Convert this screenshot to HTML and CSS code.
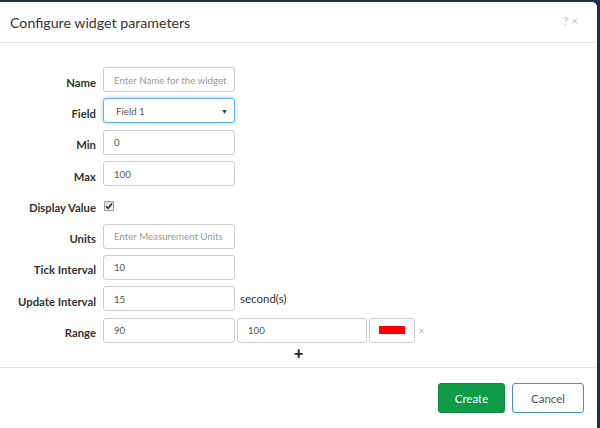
FILE: index.html
```html
<!DOCTYPE html>
<html>
<head>
<meta charset="utf-8">
<link rel="stylesheet" href="styles.css">
</head>
<body>
<div class="modal">
  <div class="modal-header">
    <h4 class="title">Configure widget parameters</h4>
    <div class="tools"><span class="help">?</span><span class="close">×</span></div>
  </div>
  <div class="modal-body">
    <div class="form">
      <label class="lbl">Name</label>
      <div class="ctl"><input class="inp w1" placeholder="Enter Name for the widget"></div>

      <label class="lbl">Field</label>
      <div class="ctl"><div class="inp w1 select focus"><span>Field 1</span><span class="caret">▼</span></div></div>

      <label class="lbl">Min</label>
      <div class="ctl"><input class="inp w1" value="0"></div>

      <label class="lbl">Max</label>
      <div class="ctl"><input class="inp w1" value="100"></div>

      <label class="lbl">Display Value</label>
      <div class="ctl"><span class="check"><svg width="8" height="8" viewBox="0 0 8 8"><path d="M1 4.2 L3 6.3 L7 1.5" fill="none" stroke="#333" stroke-width="1.6"/></svg></span></div>

      <label class="lbl">Units</label>
      <div class="ctl"><input class="inp w1" placeholder="Enter Measurement Units"></div>

      <label class="lbl">Tick Interval</label>
      <div class="ctl"><input class="inp w1" value="10"></div>

      <label class="lbl">Update Interval</label>
      <div class="ctl"><input class="inp w1" value="15"><span class="unit">second(s)</span></div>

      <label class="lbl">Range</label>
      <div class="ctl range">
        <input class="inp w1" value="90">
        <input class="inp w2" value="100">
        <div class="inp color"><span class="swatch"></span></div>
        <span class="rm">×</span>
      </div>
    </div>
    <div class="add">+</div>
  </div>
  <div class="modal-footer">
    <button class="btn create">Create</button>
    <button class="btn cancel">Cancel</button>
  </div>
</div>
</body>
</html>
```

FILE: styles.css
```css
html, body {
  margin: 0;
  padding: 0;
  height: 100%;
}
body {
  background: #1f3347;
  overflow: hidden;
  font-family: "Lato", "Open Sans", sans-serif;
}
.modal {
  margin-top: 2px;
  width: 597px;
  height: 430px;
  background: #fff;
  border-top-right-radius: 5px;
  box-sizing: border-box;
}
.modal-header {
  height: 40px;
  border-bottom: 1px solid #e5e5e5;
  display: flex;
  align-items: center;
  justify-content: space-between;
  padding: 0 19px 0 10px;
}
.title {
  margin: 0;
  font-size: 14.2px;
  font-weight: 400;
  color: #333;
}
.tools {
  display: flex;
  gap: 3px;
  color: #c4c4c4;
  font-size: 12px;
  margin-top: -4px;
}
.modal-body {
  padding: 24px 0 0 0;
  height: 325px;
  box-sizing: border-box;
  border-bottom: 1px solid #e5e5e5;
}
.form {
  display: grid;
  grid-template-columns: 96px 1fr;
  column-gap: 7px;
  row-gap: 6px;
  grid-auto-rows: 25.3px;
}
.lbl {
  font-size: 11.3px;
  font-weight: 700;
  color: #333;
  text-align: right;
  align-self: center;
  padding-top: 5px;
  white-space: nowrap;
}
.ctl {
  display: flex;
  align-items: center;
}
.inp {
  height: 25px;
  box-sizing: border-box;
  border: 1px solid #ccc;
  border-radius: 3px;
  padding: 0 2px 0 10px;
  font-family: "Lato", sans-serif;
  font-size: 9.7px;
  color: #555;
  outline: none;
  background: #fff;
  display: flex;
  align-items: center;
}
.inp::placeholder {
  color: #999;
}
.w1 { width: 132px; }
.w2 { width: 130px; margin-left: 2px; }
.select {
  justify-content: space-between;
  padding-right: 6px;
  padding-left: 12px;
}
.focus {
  border-color: #66afe9;
  box-shadow: 0 0 4px rgba(102, 175, 233, 0.6);
}
.caret {
  font-size: 7px;
  color: #333;
}
.check {
  width: 8px;
  height: 8px;
  border: 1px solid #999;
  border-radius: 1px;
  background: #e8e8e8;
  margin-left: 1px;
  margin-top: 3px;
  display: flex;
}
.unit {
  margin-left: 5px;
  font-size: 11.5px;
  color: #333;
}
.color {
  width: 46px;
  margin-left: 2px;
  justify-content: center;
  padding: 0;
}
.swatch {
  width: 26px;
  height: 8px;
  background: #ff0000;
}
.rm {
  margin-left: 3px;
  color: #bbb;
  font-size: 12px;
}
.add {
  margin: 0 0 0 294px;
  font-size: 16px;
  font-weight: 900;
  color: #222;
  line-height: 20px;
}
.modal-footer {
  display: flex;
  justify-content: flex-end;
  gap: 7px;
  padding: 15px 13px 0 0;
}
.btn {
  height: 30px;
  border-radius: 3px;
  font-family: "Lato", sans-serif;
  font-size: 11.5px;
  padding: 0;
}
.create {
  width: 67px;
  background: #0f9a47;
  border: 1px solid #0b8a3d;
  color: #fff;
}
.cancel {
  width: 72px;
  background: #fff;
  border: 1px solid #4a8fc4;
  color: #555;
}
```
